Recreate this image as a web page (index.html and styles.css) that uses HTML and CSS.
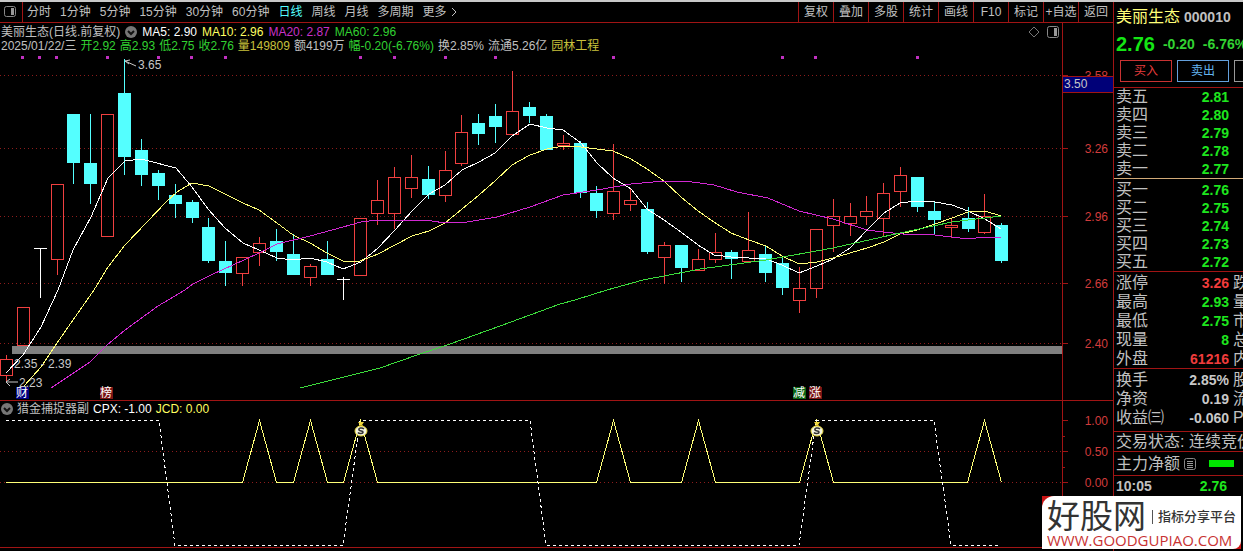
FILE: index.html
```
<!DOCTYPE html>
<html lang="zh-CN">
<head>
    <meta charset="UTF-8">
    <title>美丽生态 000010</title>
    <link rel="stylesheet" href="styles.css">
</head>
<body>
<div class="window-edge"></div>
<div class="app">
    <main class="main">
        <nav class="toolbar">
            <button class="tool-icon" aria-label="侧栏">
                <svg width="12" height="12" viewBox="0 0 12 12"><rect x="0.5" y="0.5" width="11" height="10" rx="2" fill="none" stroke="#888"/><rect x="7" y="2" width="3" height="7" fill="#999"/></svg>
            </button>
            <div class="periods">
                <button>分时</button>
                <button>1分钟</button>
                <button>5分钟</button>
                <button>15分钟</button>
                <button>30分钟</button>
                <button>60分钟</button>
                <button class="active">日线</button>
                <button>周线</button>
                <button>月线</button>
                <button>多周期</button>
                <button class="more">更多
                    <svg width="6" height="10" viewBox="0 0 6 10"><path d="M1 1L5 5L1 9" fill="none" stroke="#c0c0c0"/></svg>
                </button>
            </div>
            <div class="tools">
                <button>复权</button>
                <button>叠加</button>
                <button>多股</button>
                <button>统计</button>
                <button>画线</button>
                <button>F10</button>
                <button>标记</button>
                <button>+自选</button>
                <button>返回</button>
            </div>
        </nav>

        <!-- K line -->
        <section class="panel">
            <div class="chart-head">
                <div class="line">
                    <span>美丽生态(日线.前复权)</span>
                    <button class="round" aria-label="展开"><svg width="12" height="12" viewBox="0 0 12 12"><circle cx="6" cy="6" r="6" fill="#777"/><path d="M3 5L6 8L9 5" fill="none" stroke="#111" stroke-width="2"/></svg></button>
                    <span class="white">MA5: 2.90</span>
                    <span class="yellow">MA10: 2.96</span>
                    <span class="magenta">MA20: 2.87</span>
                    <span class="green">MA60: 2.96</span>
                    <span class="head-icons">
                        <svg width="12" height="12" viewBox="0 0 12 12"><path d="M6 1L11 6L6 11L1 6Z" fill="none" stroke="#777"/></svg>
                        <svg width="12" height="12" viewBox="0 0 12 12"><rect x="0.5" y="0.5" width="11" height="11" rx="2" fill="none" stroke="#888"/><rect x="7" y="2" width="3" height="8" fill="#999"/></svg>
                    </span>
                </div>
                <div class="line quote">
                    <span>2025/01/22/三</span>
                    <span class="green">开2.92</span>
                    <span class="green">高2.93</span>
                    <span class="green">低2.75</span>
                    <span class="green">收2.76</span>
                    <span class="gold">量149809</span>
                    <span>额4199万</span>
                    <span class="green">幅-0.20(-6.76%)</span>
                    <span>换2.85%</span>
                    <span>流通5.26亿</span>
                    <span class="gold">园林工程</span>
                </div>
            </div>
            <svg class="chart" viewBox="0 55 1113 345">
                <g class="grid">
                    <path d="M0 75.5H1062M0 148.5H1062M0 216.5H1062M0 283.5H1062M0 343.5H1062"/>
                </g>
                <path class="axis" d="M1062.5 55V400M1062 75.5H1068M1062 148.5H1068M1062 216.5H1068M1062 283.5H1068M1062 343.5H1068"/>
                <g class="axis-text">
                    <text x="1108" y="80">3.58</text>
                    <text x="1108" y="153">3.26</text>
                    <text x="1108" y="221">2.96</text>
                    <text x="1108" y="288">2.66</text>
                    <text x="1108" y="348">2.40</text>
                </g>
                <rect x="1063" y="77" width="50" height="15" fill="#000078"/>
                <path class="axis" d="M1063 76.5H1113M1063 92.5H1113"/>
                <text class="label" x="1064" y="88">3.50</text>

                <g id="dots" fill="#c030c0"></g>
                <g id="candles"></g>
                <rect x="12" y="346" width="1050" height="8" fill="#808080"/>
                <g id="averages" class="averages"></g>

                <path class="pointer" d="M125 61L130 60M125 61L129 64M125 61L136 66M6 382H18M6 382L10 379M6 382L10 386"/>
                <text class="label" x="138" y="69">3.65</text>
                <text class="label" x="14" y="368">2.35 - 2.39</text>
                <text class="label" x="19" y="387">2.23</text>

                <g class="tag">
                    <rect x="16" y="387" width="13" height="12" fill="#000080"/><text x="16" y="397">财</text>
                    <rect x="100" y="387" width="13" height="12" fill="#7a1414"/><text x="100" y="397">榜</text>
                    <rect x="793" y="387" width="13" height="12" fill="#0a6414"/><text x="793" y="397">减</text>
                    <rect x="809" y="387" width="13" height="12" fill="#7a1414"/><text x="809" y="397">涨</text>
                </g>
            </svg>
        </section>

        <!-- indicator -->
        <section class="panel">
            <div class="sub-head">
                <button class="round" aria-label="展开"><svg width="12" height="12" viewBox="0 0 12 12"><circle cx="6" cy="6" r="6" fill="#777"/><path d="M3 5L6 8L9 5" fill="none" stroke="#111" stroke-width="2"/></svg></button>
                <span>猎金捕捉器副</span>
                <span class="white">CPX: -1.00</span>
                <span class="yellow">JCD: 0.00</span>
            </div>
            <svg class="chart" viewBox="0 417 1113 130">
                <defs>
                    <g id="bag">
                        <path d="M-3 1H3L1 4H-1Z" fill="#f0d83c"/>
                        <rect x="-2" y="4" width="4" height="2" fill="#a88a10"/>
                        <ellipse cx="0" cy="10" rx="6" ry="5" fill="#f4f4e0" stroke="#e8d83c" stroke-width="1"/>
                        <path d="M3 8C1 6 -3 7 -2 9C-1 10.500 2 9.500 2 11C2 13 -2 13 -3 11.500" fill="none" stroke="#333" stroke-width="1.500"/>
                    </g>
                </defs>
                <path class="grid" d="M0 451.5H1062M0 482.5H1062"/>
                <path class="axis" d="M1062.5 417V547M1062 420.5H1068M1062 436.5H1065M1062 451.5H1068M1062 467.5H1065M1062 482.5H1068"/>
                <g class="axis-text">
                    <text x="1108" y="425">1.00</text>
                    <text x="1108" y="456">0.50</text>
                    <text x="1108" y="487">0.00</text>
                </g>
                <g class="signals">
                    <polyline id="jcd" stroke="#ffff78"/>
                    <polyline stroke="#fff" stroke-dasharray="3 3" points="6,420.5 159,420.5 175,545.5 343,545.5 360,420.5 530,420.5 546,545.5 799,545.5 816,420.5 934,420.5 951,545.5 1001,545.5"/>
                </g>
                <use href="#bag" x="361" y="421"/>
                <use href="#bag" x="817" y="421"/>
            </svg>
        </section>
    </main>

    <aside class="side">
        <div class="stock"><span class="name">美丽生态</span><span class="code">000010</span></div>
        <div class="price"><span class="last">2.76</span><span>-0.20</span><span>-6.76%</span></div>
        <div class="trade">
            <button class="buy">买入</button>
            <button class="sell">卖出</button>
            <button class="other" aria-label="更多"></button>
        </div>
        <table class="rows depth">
            <tr><th>卖五</th><td>2.81</td></tr>
            <tr><th>卖四</th><td>2.80</td></tr>
            <tr><th>卖三</th><td>2.79</td></tr>
            <tr><th>卖二</th><td>2.78</td></tr>
            <tr><th>卖一</th><td>2.77</td></tr>
        </table>
        <table class="rows depth bids">
            <tr><th>买一</th><td>2.76</td></tr>
            <tr><th>买二</th><td>2.75</td></tr>
            <tr><th>买三</th><td>2.74</td></tr>
            <tr><th>买四</th><td>2.73</td></tr>
            <tr><th>买五</th><td>2.72</td></tr>
        </table>
        <table class="rows stats">
            <tr><th>涨停</th><td class="up">3.26</td><th class="cut">跌</th></tr>
            <tr><th>最高</th><td>2.93</td><th class="cut">量</th></tr>
            <tr><th>最低</th><td>2.75</td><th class="cut">市</th></tr>
            <tr><th>现量</th><td>8</td><th class="cut">总</th></tr>
            <tr><th>外盘</th><td class="up">61216</td><th class="cut">内</th></tr>
        </table>
        <table class="rows stats basics">
            <tr><th>换手</th><td class="flat">2.85%</td><th class="cut">股</th></tr>
            <tr><th>净资</th><td class="flat">0.19</td><th class="cut">流</th></tr>
            <tr><th>收益㈢</th><td class="flat">-0.060</td><th class="cut">P</th></tr>
        </table>
        <div class="state">交易状态: 连续竞价</div>
        <div class="flow">
            <span>主力净额</span>
            <svg width="12" height="12" viewBox="0 0 12 12"><rect x="0.5" y="0.5" width="11" height="11" rx="2" fill="none" stroke="#888"/><path d="M3 3.500H9M3 5.500H9M3 7.500H9M3 9.500H9" stroke="#999"/></svg>
            <i class="bar"></i>
        </div>
        <div class="tick"><span>10:05</span><span class="tick-price">2.76</span></div>
    </aside>
</div>

<div class="brand">
    <div class="brand-inner">
        <div class="brand-top"><span class="brand-name">好股网</span><span class="brand-sub">指标分享平台</span></div>
        <a class="brand-url">WWW.GOODGUPIAO.COM</a>
    </div>
</div>
<script src="chart.js"></script>
</body>
</html>
```
FILE: styles.css
```
* {
    box-sizing: border-box;
}

body {
    margin: 0;
    height: 100vh;
    overflow: hidden;
    background-color: #000;
    color: #c0c0c0;
    font-family: "Liberation Sans", "Noto Sans CJK SC", sans-serif;
    font-size: 12px;
    line-height: 14px;
}

button {
    margin: 0;
    padding: 0;
    border: none;
    background: none;
    color: inherit;
    font: inherit;
    white-space: nowrap;
    cursor: pointer;
}

svg {
    display: block;
    flex: none;
}

.window-edge {
    height: 2px;
    background-color: #c8c8c8;
}

.app {
    display: flex;
    align-items: stretch;
    height: calc(100vh - 2px);
}

.main {
    flex: 1;
    min-width: 0;
}

/* toolbar */
.toolbar {
    display: flex;
    height: 21px;
    border-bottom: 1px solid #a01414;
}

.tool-icon {
    display: flex;
    align-items: center;
    width: 23px;
    padding-left: 4px;
    border-right: 1px solid #a01414;
}

.periods {
    display: flex;
    align-items: center;
    gap: 9px;
    padding-left: 4px;
}

.periods .active {
    color: #54ffff;
}

.periods .more {
    display: flex;
    align-items: center;
    gap: 4px;
}

.tools {
    display: flex;
    margin-left: auto;
}

.tools button {
    width: 35px;
    border-left: 1px solid #a01414;
}

/* panels */
.panel {
    border-bottom: 1px solid #a01414;
}

.chart-head {
    height: 32px;
    margin-right: 50px;
    padding: 2px 3px 2px 1px;
    border-right: 1px solid #a01414;
}

.line {
    display: flex;
    align-items: center;
    gap: 5px;
    height: 14px;
    white-space: nowrap;
}

.quote {
    gap: 4px;
}

.head-icons {
    display: flex;
    gap: 7px;
    margin-left: auto;
}

.sub-head {
    display: flex;
    align-items: center;
    gap: 4px;
    height: 16px;
    margin-right: 50px;
    padding-left: 1px;
    border-right: 1px solid #a01414;
}

.white { color: #fff; }
.yellow { color: #ffff60; }
.magenta { color: #c832c8; }
.green { color: #32d232; }
.gold { color: #c8c03c; }

.chart {
    width: 100%;
    height: auto;
    overflow: visible;
}

.chart text {
    font-size: 12px;
}

.grid {
    stroke: #8c1c1c;
    stroke-dasharray: 1 3;
    fill: none;
}

.axis {
    stroke: #a01414;
    fill: none;
}

.axis-text {
    fill: #d23c3c;
    text-anchor: end;
}

.label {
    fill: #c8c8c8;
}

.pointer {
    stroke: #c8c8c8;
    fill: none;
}

.tag {
    fill: #fff;
}

.averages,
.signals {
    fill: none;
    shape-rendering: crispEdges;
}

/* side */
.side {
    width: 130px;
    overflow: hidden;
    border-left: 1px solid #a01414;
    font-size: 16px;
    white-space: nowrap;
}

.stock {
    display: flex;
    align-items: center;
    gap: 4px;
    height: 30px;
    padding-left: 2px;
}

.name {
    color: #ffff78;
}

.code {
    font-size: 14px;
    font-weight: bold;
}

.price {
    display: flex;
    align-items: center;
    gap: 8px;
    height: 24px;
    padding-left: 2px;
    color: #32d232;
    font-size: 14px;
    font-weight: bold;
}

.last {
    color: #14e614;
    font-size: 20px;
}

.trade {
    display: flex;
    gap: 5px;
    padding: 4px 0 5px 6px;
    font-size: 12px;
}

.trade button {
    flex: none;
    width: 52px;
    height: 22px;
    border: 1px solid #c83232;
    color: #e63c3c;
}

.trade .sell {
    border-color: #64a0dc;
    color: #64b4f0;
}

.trade .other {
    border-color: #999;
}

.rows {
    width: 100%;
    table-layout: fixed;
    border-collapse: separate;
    border-spacing: 0;
    border-top: 1px solid #a01414;
}

.rows th {
    width: 60px;
    padding: 0 0 0 2px;
    font-weight: normal;
    text-align: left;
}

.rows td {
    padding: 0;
    color: #1ee61e;
    font-size: 14px;
    font-weight: bold;
    text-align: right;
}

.depth tr {
    height: 18px;
}

.rows.depth td {
    padding-right: 14px;
}

.rows.bids {
    padding-top: 2px;
    border-top-color: #d2aa78;
}

.stats {
    padding-top: 1px;
}

.stats tr {
    height: 19px;
}

.basics {
    padding-bottom: 4px;
}

.rows .cut {
    width: 14px;
    padding-left: 4px;
    overflow: hidden;
}

.rows .up {
    color: #f03c3c;
}

.rows .flat {
    color: #c8c8c8;
}

.state,
.flow,
.tick {
    display: flex;
    align-items: center;
    height: 20px;
    padding-left: 2px;
    border-top: 1px solid #a01414;
}

.flow {
    gap: 4px;
    height: 24px;
}

.bar {
    width: 25px;
    height: 7px;
    margin-left: 9px;
    background-color: #00e600;
}

.tick {
    justify-content: space-between;
    padding-right: 16px;
    font-size: 14px;
    font-weight: bold;
}

.tick-price {
    color: #1ee61e;
}

/* brand plate over the corner */
.brand {
    position: absolute;
    right: 2px;
    bottom: 2px;
    background-color: #c81414;
}

.brand-inner {
    padding: 4px 5px 1px 5px;
    border-radius: 12px 0 8px 0;
    background-color: #fff;
}

.brand-top {
    display: flex;
    align-items: center;
    gap: 6px;
}

.brand-name {
    color: #333;
    font-size: 33px;
    line-height: 33px;
}

.brand-sub {
    padding-left: 5px;
    border-left: 1px solid #555;
    color: #333;
    font-size: 13px;
    font-weight: 500;
}

.brand-url {
    display: block;
    color: #c83232;
    font-family: "Open Sans", "Liberation Sans", sans-serif;
    font-size: 15px;
    line-height: 15px;
}
```
FILE: chart.js
```
// high, body top, body bottom, low, type (r = up, c = down, w = unchanged)
const candles = [
    [355, 359, 376, 383, 'r'], [307, 307, 346, 346, 'r'], [248, 248, 248, 298, 'w'], [184, 184, 260, 275, 'r'],
    [114, 114, 163, 184, 'c'], [114, 163, 184, 204, 'c'], [114, 114, 237, 237, 'r'], [59, 93, 157, 175, 'c'],
    [139, 150, 175, 186, 'c'], [170, 173, 186, 200, 'c'], [184, 195, 204, 218, 'c'], [200, 202, 218, 223, 'c'],
    [218, 227, 261, 263, 'c'], [241, 261, 273, 286, 'c'], [257, 257, 274, 286, 'r'], [237, 243, 253, 266, 'r'],
    [229, 241, 252, 261, 'c'], [234, 254, 275, 275, 'c'], [264, 266, 278, 286, 'r'], [241, 259, 275, 275, 'c'],
    [277, 279, 279, 300, 'w'], [218, 218, 276, 276, 'r'], [180, 200, 214, 225, 'r'], [167, 177, 214, 229, 'r'],
    [155, 177, 189, 198, 'r'], [166, 179, 195, 199, 'c'], [151, 170, 196, 202, 'r'], [115, 132, 164, 166, 'r'],
    [114, 123, 134, 145, 'c'], [104, 116, 127, 143, 'c'], [71, 111, 135, 135, 'r'], [102, 107, 116, 123, 'c'],
    [114, 116, 150, 150, 'c'], [135, 143, 146, 150, 'r'], [141, 143, 193, 198, 'c'], [186, 193, 211, 218, 'c'],
    [144, 191, 214, 220, 'r'], [189, 200, 205, 211, 'r'], [202, 209, 252, 254, 'c'], [242, 245, 258, 284, 'r'],
    [245, 245, 268, 282, 'c'], [249, 259, 271, 271, 'r'], [233, 252, 260, 263, 'r'], [250, 252, 259, 279, 'c'],
    [212, 250, 262, 262, 'r'], [246, 254, 273, 282, 'c'], [257, 263, 288, 295, 'c'], [267, 288, 301, 313, 'r'],
    [229, 229, 289, 298, 'r'], [199, 216, 226, 252, 'r'], [203, 216, 224, 236, 'r'], [196, 211, 217, 225, 'r'],
    [183, 193, 219, 237, 'r'], [167, 175, 192, 207, 'r'], [177, 177, 207, 212, 'c'], [202, 211, 220, 234, 'c'],
    [218, 225, 228, 238, 'r'], [207, 218, 229, 232, 'c'], [194, 216, 233, 234, 'r'], [223, 225, 261, 263, 'c']
];

const averages = {
    '#ffffff': '6,373 23,355 41,327 58,290 73,250 91,217 108,178 125,161 141,159 176,168 192,187 208,209 225,228 243,243 259,250 277,258 293,260 310,258 327,262 343,269 361,262 378,248 395,230 412,211 429,194 445,185 462,170 479,162 495,153 512,136 530,124 547,128 563,130 581,143 597,163 613,178 631,189 647,209 664,220 681,232 698,245 714,255 731,257 749,258 766,259 782,265 799,273 817,266 833,259 850,248 867,230 884,213 900,203 917,201 935,202 952,205 968,211 985,219 1001,229',
    '#ffff78': '24,386 41,367 57,343 73,320 94,290 108,267 125,245 147,222 167,201 177,192 192,183 209,186 225,194 243,203 259,210 277,223 293,235 310,243 327,253 343,261 360,261 378,254 395,245 412,236 429,231 445,223 462,209 479,195 495,181 512,165 530,155 547,149 563,146 581,147 597,149 613,151 631,159 647,169 664,181 681,197 698,211 714,222 731,233 749,240 766,246 782,256 799,264 817,262 833,258 850,253 867,248 884,242 900,234 917,230 935,224 952,218 968,212 985,211 1001,216',
    '#d228d2': '51,388 90,362 107,345 125,330 158,306 185,290 193,284 213,274 233,265 259,253 277,244 310,236 343,227 361,222 378,220 417,220 432,221 445,223 467,222 497,217 530,207 563,195 597,190 631,184 664,181 683,181 700,183 714,185 737,192 768,198 799,211 833,219 867,230 883,232 903,234 935,235 968,239 985,237 1001,237',
    '#3cdc3c': '300,388 340,378 360,373 380,368 420,354 450,344 500,326 560,304 575,300 607,290 643,280 690,271 700,269 766,260 833,248 900,233 952,222 1001,216'
};

const colors = { r: '#f04040', c: '#54ffff', w: '#ffffff' };

function add(parent, name, attrs) {
    const el = document.createElementNS('http://www.w3.org/2000/svg', name);
    for (const key in attrs) {
        el.setAttribute(key, attrs[key]);
    }
    parent.appendChild(el);
}

const group = document.getElementById('candles');
candles.forEach(([high, top, bottom, low, type], i) => {
    const x = Math.round(6 + i * 16.87);
    const color = colors[type];
    if (high < top) {
        add(group, 'rect', { x: x, y: high, width: 1, height: top - high, fill: color });
    }
    if (low > bottom) {
        add(group, 'rect', { x: x, y: bottom, width: 1, height: low - bottom, fill: color });
    }
    if (type === 'r') {
        add(group, 'rect', { x: x - 5.5, y: top + 0.5, width: 12, height: bottom - top - 1, fill: 'none', stroke: color });
    } else {
        add(group, 'rect', { x: x - 6, y: top, width: 13, height: Math.max(bottom - top, 1), fill: color });
    }
});

for (const color in averages) {
    add(document.getElementById('averages'), 'polyline', { points: averages[color], stroke: color });
}

[22, 39, 56, 107, 158, 191, 225, 360, 394, 445, 495, 613, 782, 815, 917].forEach(x => {
    add(document.getElementById('dots'), 'rect', { x: x - 1, y: 56, width: 3, height: 3 });
});

// every signal rises from 0 to 1 and falls back on the next bar
const points = ['6,482.5'];
[259.5, 310.5, 360.5, 613.5, 698.5, 816.5, 984.5].forEach(x => {
    points.push(`${x - 17},482.5`, `${x},420.5`, `${x + 17},482.5`);
});
document.getElementById('jcd').setAttribute('points', points.join(' '));
```
